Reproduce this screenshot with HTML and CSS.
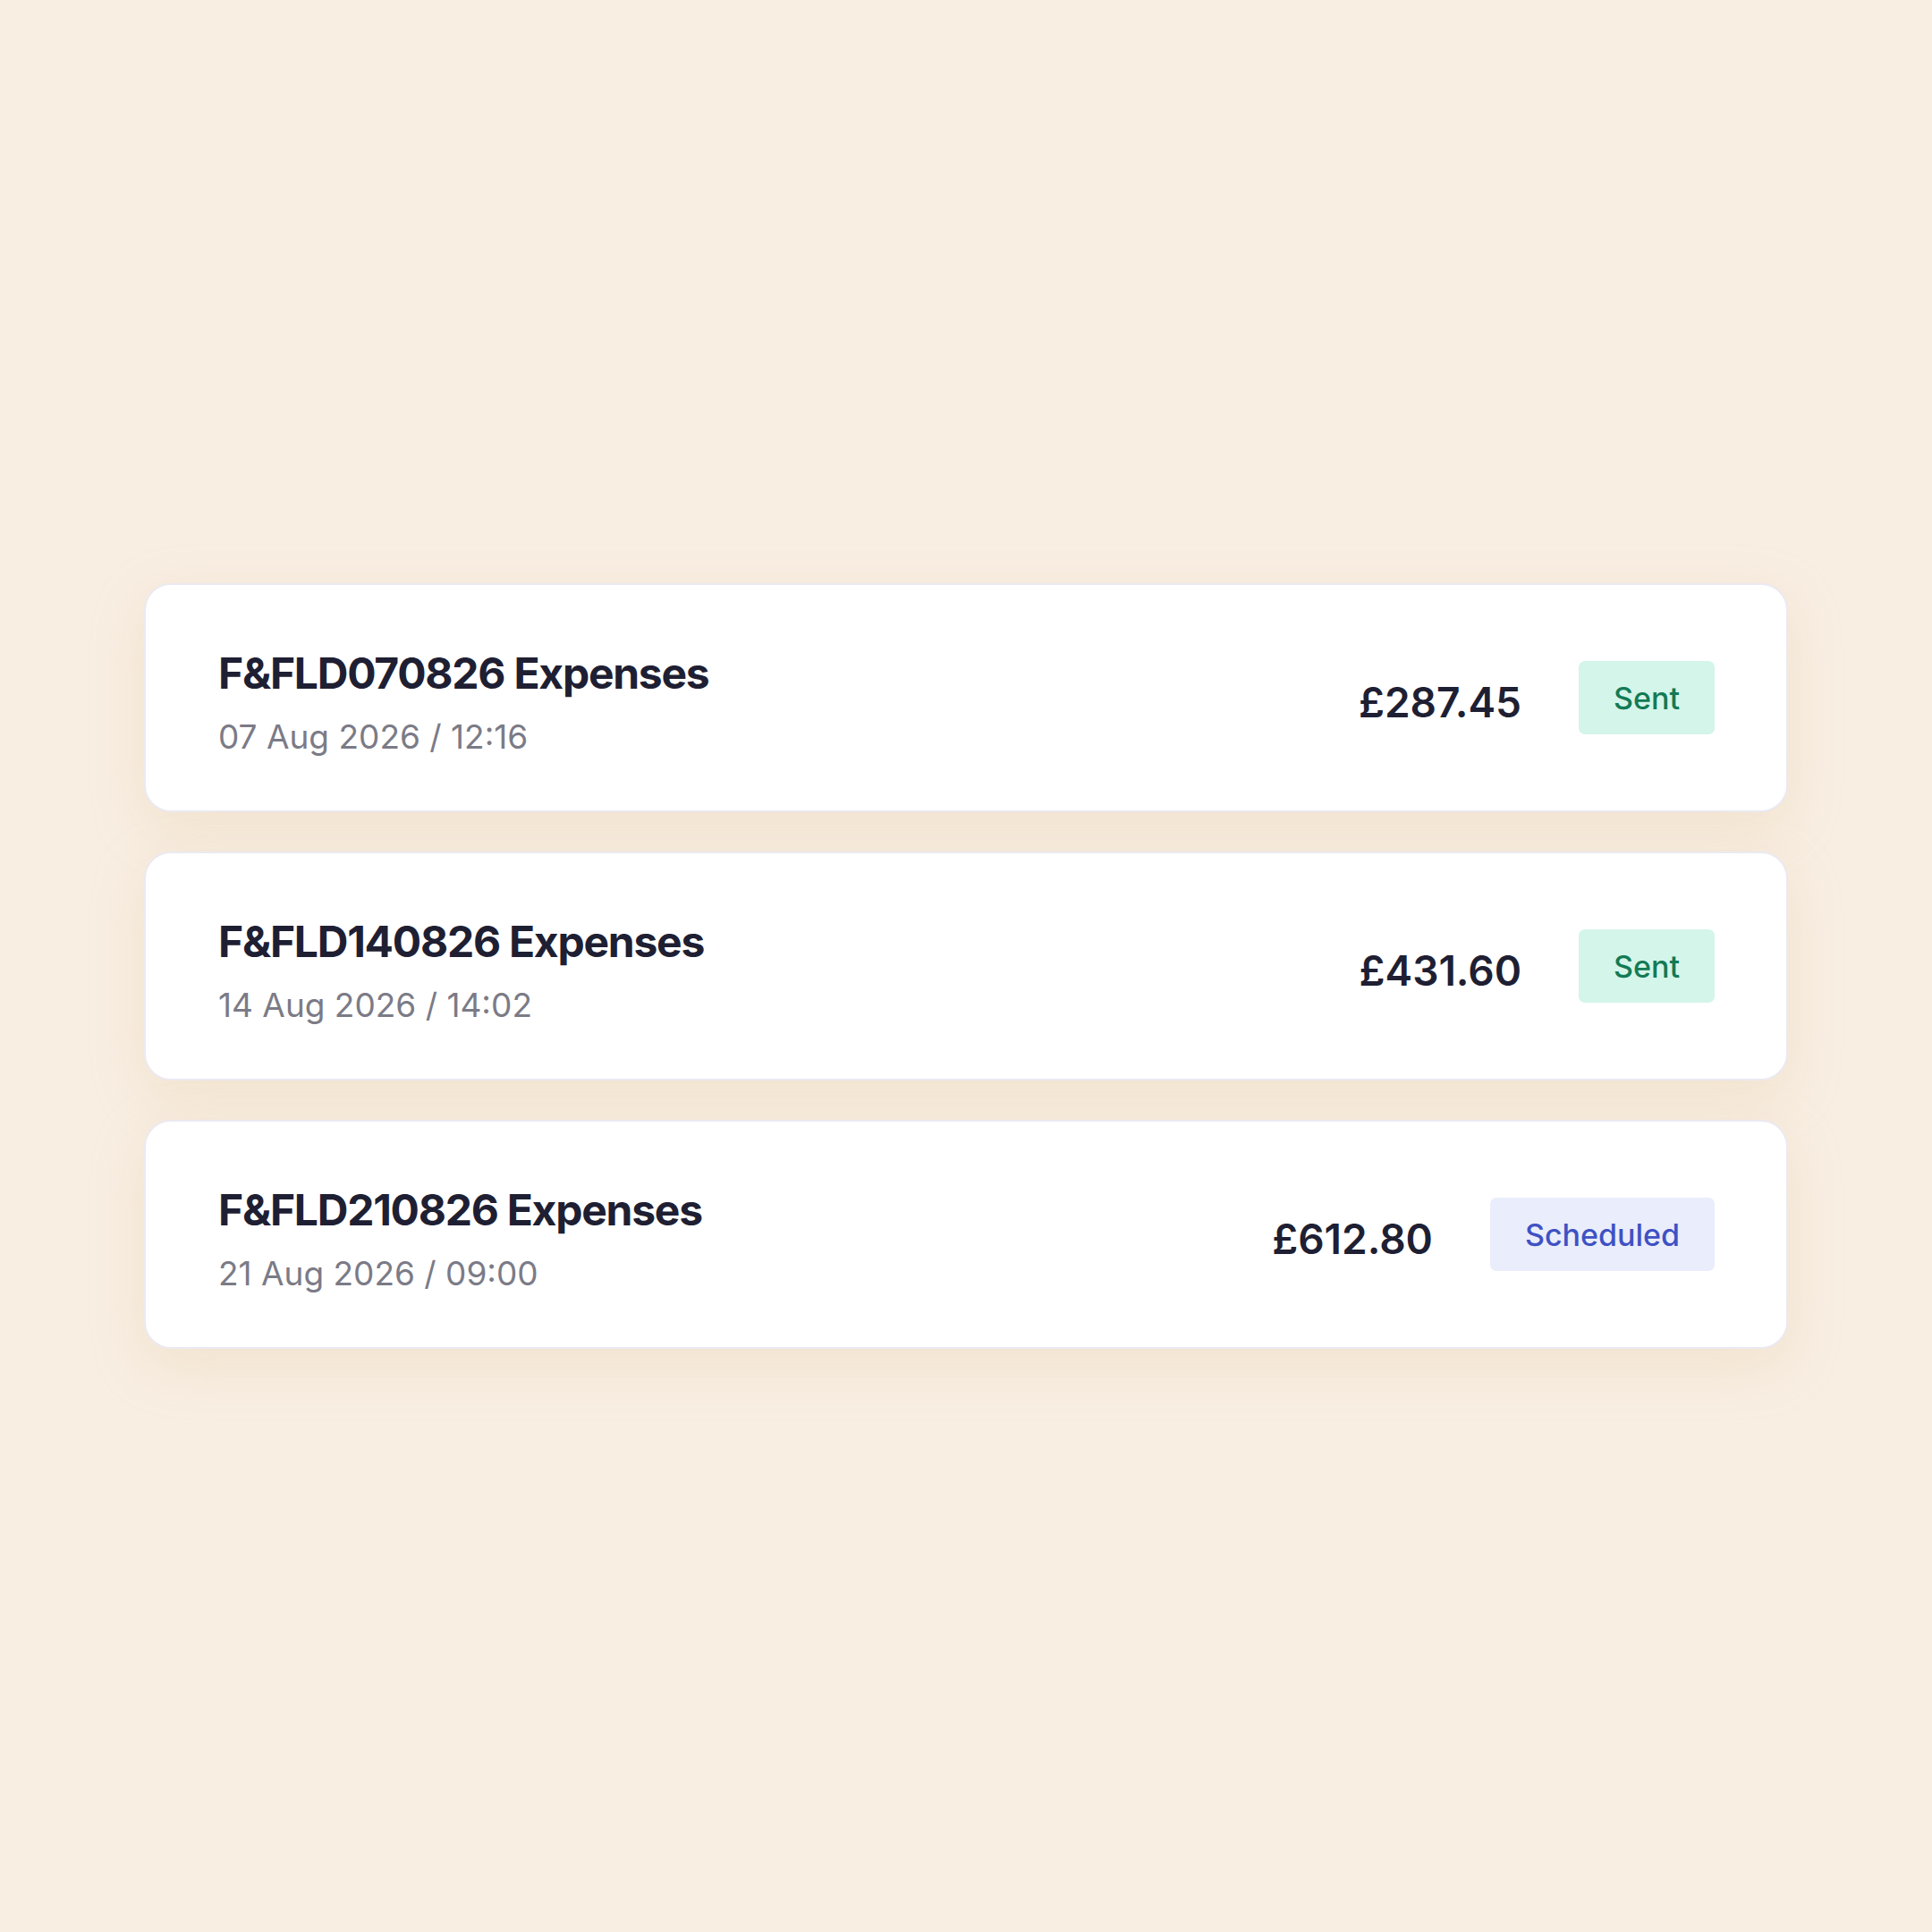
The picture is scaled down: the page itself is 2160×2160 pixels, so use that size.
FILE: index.html
```html
<!DOCTYPE html>
<html lang="en">
<head>
  <meta charset="UTF-8">
  <meta name="viewport" content="width=device-width, initial-scale=1.0">
  <title>Expenses</title>
  <link rel="stylesheet" href="styles.css">
</head>
<body>

  <!-- Expense report list -->
  <div class="report-list">
    <div class="report-card">
      <div class="report-info">
        <div class="report-title">F&amp;FLD070826 Expenses</div>
        <div class="report-date">07 Aug 2026 / 12:16</div>
      </div>
      <div class="report-meta">
        <div class="report-amount">£287.45</div>
        <div class="status status-sent">Sent</div>
      </div>
    </div>

    <div class="report-card">
      <div class="report-info">
        <div class="report-title">F&amp;FLD140826 Expenses</div>
        <div class="report-date">14 Aug 2026 / 14:02</div>
      </div>
      <div class="report-meta">
        <div class="report-amount">£431.60</div>
        <div class="status status-sent">Sent</div>
      </div>
    </div>

    <div class="report-card">
      <div class="report-info">
        <div class="report-title">F&amp;FLD210826 Expenses</div>
        <div class="report-date">21 Aug 2026 / 09:00</div>
      </div>
      <div class="report-meta">
        <div class="report-amount">£612.80</div>
        <div class="status status-scheduled">Scheduled</div>
      </div>
    </div>
  </div>

</body>
</html>
```

FILE: styles.css
```css
/* General Styles */
body {
  display: flex;
  justify-content: center;
  align-items: center;
  height: 100vh;
  margin: 0;
  background-color: #f8eee2;
  font-family: Inter, "Noto Sans", sans-serif;
  color: #1f1f33;
}

/* Card list */
.report-list {
  display: flex;
  flex-direction: column;
  gap: 44px;
  width: 1838px;
}

.report-card {
  display: flex;
  justify-content: space-between;
  align-items: center;
  box-sizing: border-box;
  height: 256px;
  padding: 0 80px 0 81px;
  background: white;
  border: 2px solid #ebe9f1;
  border-radius: 30px;
  box-shadow: 0 18px 60px rgba(226, 196, 156, 0.28);
}

.report-info {
  padding-top: 10px;
}

.report-title {
  font-size: 48px;
  font-weight: 700;
  line-height: 1.2;
  letter-spacing: -1.25px;
}

.report-date {
  margin-top: 20px;
  font-size: 37px;
  line-height: 1.2;
  color: #7b7b87;
}

.report-meta {
  display: flex;
  align-items: center;
  gap: 64px;
}

.report-amount {
  padding-top: 10px;
  font-size: 46px;
  font-weight: 600;
}

/* Status badges */
.status {
  display: flex;
  align-items: center;
  height: 82px;
  padding: 0 39px;
  border-radius: 7px;
  font-size: 34px;
  font-weight: 500;
}

.status-sent {
  background: #d4f5e9;
  color: #137a55;
}

.status-scheduled {
  background: #eaedfb;
  color: #3f51c4;
}
```
